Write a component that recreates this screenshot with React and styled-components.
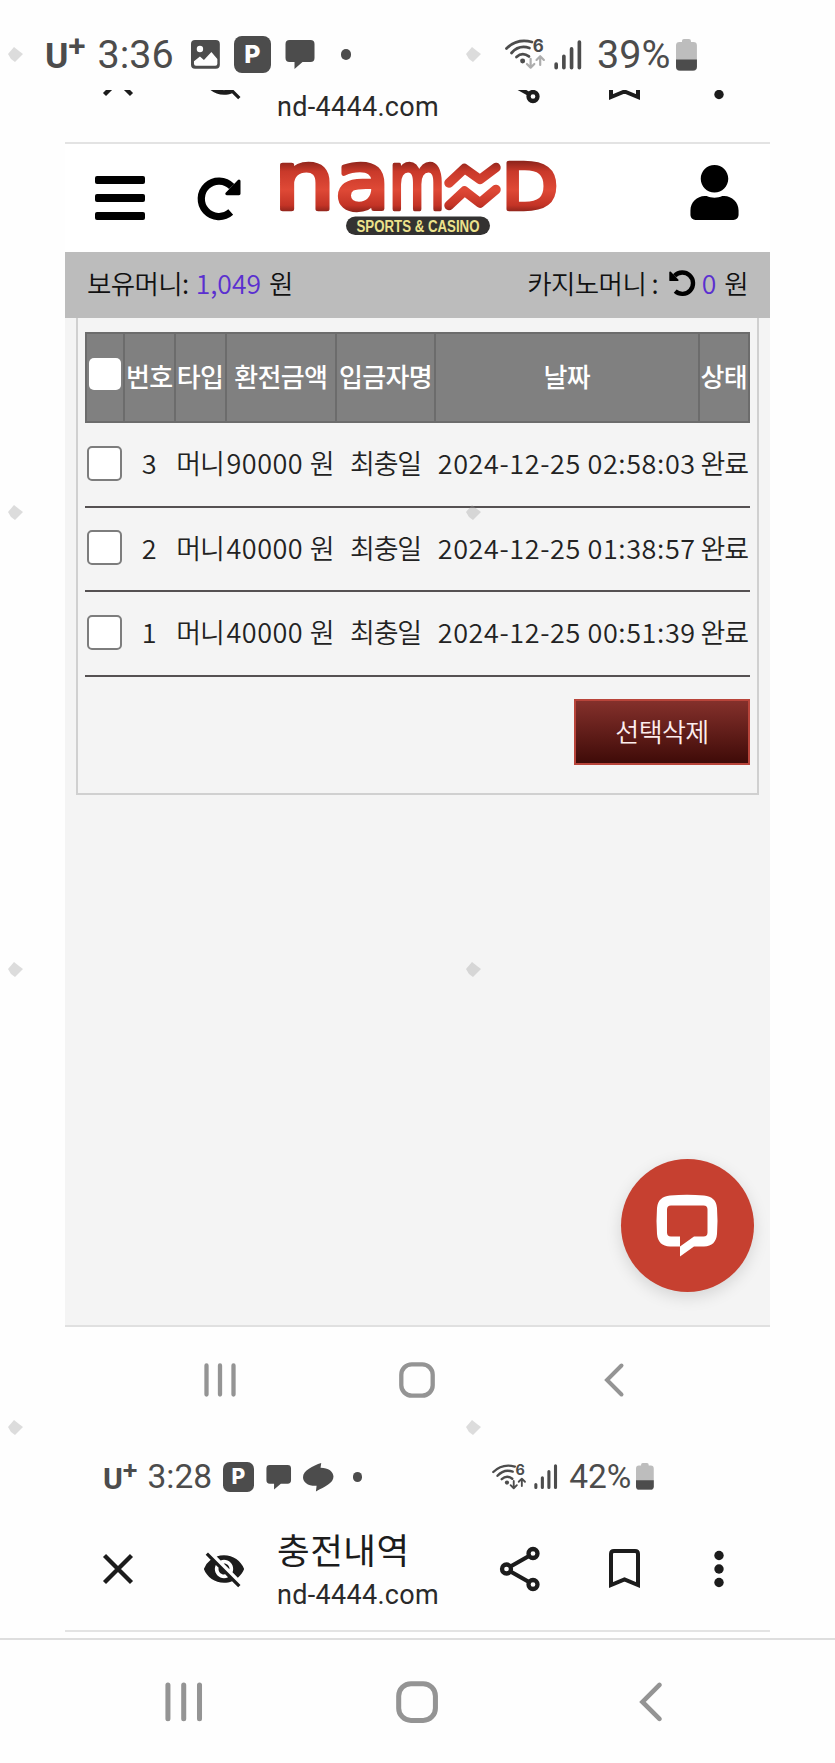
import styled, { createGlobalStyle } from "styled-components";
import { FaUser } from "react-icons/fa";
import { MdVisibilityOff } from "react-icons/md";

const GlobalStyle = createGlobalStyle`
  * {
    box-sizing: border-box;
  }
  body {
    margin: 0;
    background-color: #fefefe;
    overflow: hidden;
  }
  svg {
    display: block;
    flex-shrink: 0;
    overflow: visible;
  }
`;

const Page = styled.div`
  position: relative;
  width: 835px;
  height: 1763px;
  overflow: hidden;
  background-color: #fefefe;
  font-family: "Noto Sans CJK KR", "Noto Sans", sans-serif;
`;

const Screen = styled.div`
  width: 705px;
  margin-left: 65px;
`;

/* status bar: every size is in em, so one font-size scales the whole bar */
const StatusBar = styled.div`
  display: flex;
  align-items: center;
  height: ${(props) => props.$height}px;
  padding: ${(props) => props.$padding};
  font-family: Roboto, sans-serif;
  font-size: ${(props) => props.$size}px;
  line-height: 1;
  color: #4c4c4c;
`;

const StatusItem = styled.div`
  display: flex;
  align-items: center;
  flex-shrink: 0;
  width: ${(props) => props.$w}em;
  margin-left: ${(props) => props.$ml || 0}em;
  white-space: nowrap;
  svg {
    width: 100%;
    height: auto;
  }
`;

const Carrier = styled.span`
  display: flex;
  font-weight: 700;
  font-size: 0.9em;
  line-height: 1;
  padding-top: 0.12em;
`;

const Plus = styled.span`
  font-family: Inter, sans-serif;
  font-size: 0.86em;
  line-height: 1;
  margin: -0.31em 0 0 -0.06em;
`;

const Parking = styled.span`
  display: flex;
  align-items: center;
  justify-content: center;
  width: 0.92em;
  height: 0.92em;
  border-radius: 0.2em;
  background-color: #4c4c4c;
  color: #fefefe;
  b {
    font-family: Inter, sans-serif;
    font-weight: 800;
    font-size: 0.63em;
    line-height: 1;
  }
`;

const Dot = styled.span`
  width: 0.27em;
  height: 0.27em;
  border-radius: 50%;
  background-color: #4c4c4c;
`;

/* in-app browser toolbar */
const ToolbarClip = styled.div`
  display: flex;
  align-items: flex-end;
  height: 54px;
  overflow: hidden;
`;

const ToolbarRow = styled.div`
  display: grid;
  grid-template-columns: 106px 106px 191px 104px 105px 83px;
  align-items: center;
  flex-shrink: 0;
  width: 705px;
  height: 120px;
  padding-bottom: 5px;
  border-bottom: 2px solid #e3e3e3;
  color: #1c1c1c;
  > svg {
    justify-self: center;
  }
`;

const PageTitle = styled.div`
  height: 40px;
  font-size: 35.5px;
  line-height: 32px;
  letter-spacing: 0.5px;
  white-space: nowrap;
`;

const PageUrl = styled.div`
  font-family: Roboto, sans-serif;
  font-size: 27px;
  line-height: 32px;
  letter-spacing: 0.3px;
  margin-top: 6px;
  color: #2a2a2a;
`;

const TitleBlock = styled.div`
  padding-top: 6px;
`;

/* site */
const Header = styled.header`
  display: flex;
  align-items: center;
  height: 108px;
  padding: 0 30px;
  background-color: #fff;
`;

const Burger = styled.div`
  display: flex;
  flex-direction: column;
  gap: 9.5px;
  width: 50px;
  margin-right: 53px;
  span {
    height: 8.5px;
    border-radius: 2px;
    background-color: #000;
  }
`;

const Logo = styled.div`
  display: flex;
  margin: 4px 0 0 38px;
`;

const UserButton = styled.div`
  margin: -11px -2px 0 auto;
`;

const MoneyBar = styled.div`
  display: flex;
  align-items: center;
  justify-content: space-between;
  height: 66px;
  padding: 0 22px 4px;
  background-color: #bcbcbc;
`;

const Money = styled.div`
  display: flex;
  align-items: center;
  font-size: 26.5px;
  font-weight: 350;
  line-height: 40px;
  letter-spacing: -0.6px;
  color: #111;
  white-space: pre;
`;

const Amount = styled.span`
  color: #5a2fd0;
  letter-spacing: 0;
  margin: 0 8px 0 7px;
`;

const Content = styled.main`
  display: flex;
  flex-direction: column;
  justify-content: space-between;
  height: 1009px;
  background-color: #f4f4f4;
  border-bottom: 2px solid #e0e0e0;
`;

const Panel = styled.section`
  width: 683px;
  height: 477px;
  margin-left: 11px;
  padding: 14px 7px 0;
  border: 2px solid #d0d0d0;
  border-top: none;
`;

const Row = styled.div`
  display: grid;
  grid-template-columns: 39px 50.5px 51px 110.5px 99px 263.5px 51.5px;
  height: 84.5px;
  border-bottom: 2px solid #555152;
  font-size: 27px;
  font-weight: 350;
  color: #222;
`;

const HeadRow = styled(Row)`
  height: 91px;
  border: 2px solid #6c6c6c;
  border-right: none;
  grid-template-columns: 38px 50.5px 51px 110.5px 99px 263.5px 50.5px;
  background-color: #808080;
  color: #fff;
  font-size: 26px;
  font-weight: 500;
`;

const Cell = styled.div`
  display: flex;
  align-items: center;
  justify-content: center;
  padding-bottom: 2px;
  line-height: 40px;
  letter-spacing: ${(props) => props.$spacing || 0}px;
  white-space: nowrap;
`;

const HeadCell = styled(Cell)`
  padding-bottom: 3px;
  letter-spacing: -0.7px;
  border-right: 2px solid #6c6c6c;
`;

const Checkbox = styled.span`
  flex-shrink: 0;
  width: ${(props) => (props.$plain ? 32 : 35)}px;
  height: ${(props) => (props.$plain ? 32 : 35)}px;
  border: ${(props) => (props.$plain ? "none" : "2px solid #7d7d7d")};
  border-radius: 5px;
  background-color: #fff;
  margin-top: ${(props) => (props.$plain ? -5 : 0)}px;
`;

const Actions = styled.div`
  display: flex;
  justify-content: flex-end;
  padding-top: 22px;
`;

const DeleteButton = styled.button`
  width: 176px;
  height: 66px;
  padding: 0 0 3px;
  border: 2px solid #b8443a;
  background: linear-gradient(#84302b, #3f0b08);
  color: #fdeeee;
  font-family: inherit;
  font-size: 26px;
  font-weight: 350;
  letter-spacing: -0.6px;
`;

const ChatButton = styled.div`
  display: flex;
  align-items: center;
  justify-content: center;
  align-self: flex-end;
  width: 133px;
  height: 133px;
  margin: 0 16px 33px 0;
  padding-right: 2px;
  border-radius: 50%;
  background-color: #c64030;
  box-shadow: 0 5px 16px rgba(0, 0, 0, 0.13);
`;

/* android navigation keys */
const NavBar = styled.div`
  display: grid;
  grid-template-columns: repeat(3, ${(props) => props.$column}px);
  justify-content: center;
  align-items: center;
  justify-items: center;
  height: ${(props) => props.$height}px;
  padding-right: 1px;
`;

const Divider = styled.div`
  margin-top: 6px;
  height: 2px;
  background-color: #dedede;
`;

const Overlay = styled.svg`
  position: absolute;
  top: 0;
  left: 0;
  pointer-events: none;
`;

const PictureIcon = () => (
  <svg viewBox="0 0 29 29">
    <rect width="29" height="29" rx="4" fill="#4c4c4c" />
    <circle cx="9" cy="9" r="3.2" fill="#fefefe" />
    <path
      d="M3 21.500 9 16.500 13 20 20.500 12 26.500 19V24q0 2-2 2H5q-2 0-2-2Z"
      fill="#fefefe"
    />
  </svg>
);

const BubbleIcon = () => (
  <svg viewBox="0 0 30 29">
    <path
      d="M4.500 0h21q4 0 4 4v14q0 4-4 4H17.500L9.500 29V22h-5q-4 0-4-4V4q0-4 4-4Z"
      fill="#4c4c4c"
    />
  </svg>
);

const SwirlIcon = () => (
  <svg viewBox="908 429 92 86">
    <path
      d="M963 429 961 443C985 443 1000 455 1000 470 1000 490 975 500 947 515L949 498C922 499 908 487 908 472 908 452 938 437 963 429Z"
      fill="#4c4c4c"
    />
  </svg>
);

const WifiIcon = ({ arrows }) => (
  <svg viewBox="0 0 40 31" fill="none" strokeLinecap="round">
    <g stroke="#4c4c4c" strokeWidth="2.800">
      <path d="M1.500 9.500Q12-1 27 3" />
      <path d="M6.500 14Q14 5.500 24.500 9" />
      <path d="M11.500 18Q17.500 12.500 24 17.500" />
    </g>
    <circle cx="17.700" cy="22" r="2.500" fill="#4c4c4c" />
    <g stroke={arrows} strokeWidth="2.200" strokeLinejoin="round">
      <path d="M25.700 20V28.500M22 25 25.700 28.700 29.400 25" />
      <path d="M35.300 26V17.500M31.600 21 35.300 17.300 39 21" />
    </g>
    <text
      x="27.800"
      y="13.300"
      fontFamily="Inter"
      fontWeight="700"
      fontSize="17"
      fill="#4c4c4c"
    >
      6
    </text>
  </svg>
);

const SignalIcon = () => (
  <svg
    viewBox="0 0 28 30"
    stroke="#4c4c4c"
    strokeWidth="3.700"
    strokeLinecap="round"
  >
    <path d="M2.200 24.500V28M10 16.500V28M17.800 9V28M25.700 2V28" />
  </svg>
);

const BatteryIcon = () => (
  <svg viewBox="0 0 21 32">
    <path
      d="M6 3V2q0-2 2-2h5q2 0 2 2v1h2.500Q21 3 21 6.500V28q0 4-4 4H4q-4 0-4-4V6.500Q0 3 3.500 3Z"
      fill="#bdbdbd"
    />
    <path d="M0 20.500H21V27.500q0 4-4 4H4q-4 0-4-4Z" fill="#4c4c4c" />
  </svg>
);

const CloseIcon = () => (
  <svg width="32" height="32" viewBox="0 0 32 32" stroke="#1c1c1c">
    <path d="M2.500 2.500 29.500 29.500M29.500 2.500 2.500 29.500" strokeWidth="4.300" />
  </svg>
);

const ShareIcon = () => (
  <svg
    width="40"
    height="44"
    viewBox="0 0 40 44"
    fill="none"
    stroke="#1c1c1c"
    strokeWidth="4.300"
  >
    <circle cx="33" cy="6.500" r="4.500" />
    <circle cx="6.500" cy="22" r="4.500" />
    <circle cx="33" cy="37.500" r="4.500" />
    <path d="M10.500 19.500 29 9M10.500 24.500 29 35" />
  </svg>
);

const BookmarkIcon = () => (
  <svg
    width="31"
    height="40"
    viewBox="0 0 31 40"
    fill="none"
    stroke="#1c1c1c"
    strokeWidth="4"
  >
    <path d="M2 36V5q0-3 3-3H26q3 0 3 3V36L15.500 30.500Z" />
  </svg>
);

const MoreIcon = () => (
  <svg width="10" height="38" viewBox="0 0 10 38" fill="#1c1c1c">
    <circle cx="5" cy="5.500" r="4.700" />
    <circle cx="5" cy="19" r="4.700" />
    <circle cx="5" cy="32.500" r="4.700" />
  </svg>
);

const ReloadIcon = ({ size, flip }) => (
  <svg
    width={size}
    height={size}
    viewBox="0 0 130 130"
    transform={flip ? "scale(-1 1)" : undefined}
  >
    <path
      d="M102 29A53.500 53.500 0 1 0 99 106"
      fill="none"
      stroke="#000"
      strokeWidth="22"
    />
    <path
      d="M124 12V51H87Z"
      stroke="#000"
      strokeWidth="9"
      strokeLinejoin="round"
    />
  </svg>
);

const LogoMark = () => (
  <svg width="279" height="78" viewBox="0 0 279 78">
    <defs>
      <linearGradient id="red" gradientUnits="userSpaceOnUse" y1="0" y2="52" x2="0">
        <stop offset="0" stopColor="#8c241b" />
        <stop offset="0.200" stopColor="#c9392a" />
        <stop offset="0.550" stopColor="#df4936" />
        <stop offset="0.850" stopColor="#c43426" />
        <stop offset="1" stopColor="#84211a" />
      </linearGradient>
    </defs>
    <g
      fill="url(#red)"
      stroke="url(#red)"
      strokeWidth="4.500"
      strokeLinejoin="round"
      fontFamily="DejaVu Sans"
      fontSize="80"
    >
      <text x="-5" y="47.500" textLength="61" lengthAdjust="spacingAndGlyphs">n</text>
      <text x="56" y="47.500" textLength="55" lengthAdjust="spacingAndGlyphs">a</text>
      <text x="110" y="47.500" textLength="56" lengthAdjust="spacingAndGlyphs">m</text>
      <text x="223" y="47.500" fontSize="62" textLength="56" lengthAdjust="spacingAndGlyphs">D</text>
    </g>
    <g
      fill="none"
      stroke="url(#red)"
      strokeWidth="9.500"
      strokeLinecap="round"
      strokeLinejoin="round"
    >
      <path d="M170 22 185.500 7.500 201 18.500 217 6.500" />
      <path d="M170 44.500 185.500 30 201 42 217 28.500" />
    </g>
    <rect x="67" y="55.500" width="144" height="18.500" rx="9.250" fill="#333231" />
    <text
      x="77.500"
      y="70.500"
      fontFamily="Liberation Sans"
      fontWeight="700"
      fontSize="16"
      fill="#ece28c"
      textLength="123"
      lengthAdjust="spacingAndGlyphs"
    >
      SPORTS &amp; CASINO
    </text>
  </svg>
);

const ChatIcon = () => (
  <svg width="62" height="62" viewBox="0 0 62 62">
    <path
      fillRule="evenodd"
      fill="#fff"
      d="M14 0.500Q31-1 48 0.500 60 1.500 61 13 62 26 61 39 60 51 48 51.500H38L24 61.500V51.500H14Q2 51 1 39 0 26 1 13 2 1.500 14 0.500ZM15 10.500Q11 10.500 11 14.500V37.500Q11 41.500 15 41.500H24V51.500L38 41.500H47.500Q51.500 41.500 51.500 37.500V14.500Q51.500 10.500 47.500 10.500Z"
    />
  </svg>
);

const NavKeys = ({ height, column, scale }) => (
  <NavBar $height={height} $column={column}>
    <svg
      width={32 * scale}
      height={34 * scale}
      viewBox="0 0 32 34"
      stroke="#949494"
      strokeWidth="4.300"
      strokeLinecap="round"
    >
      <path d="M2.500 2.500V31.500M16 2.500V31.500M29.500 2.500V31.500" />
    </svg>
    <svg width={36 * scale} height={36 * scale} viewBox="0 0 36 36">
      <rect
        x="2.300"
        y="2.300"
        width="31.400"
        height="31.400"
        rx="10.500"
        fill="none"
        stroke="#949494"
        strokeWidth="4.300"
      />
    </svg>
    <svg
      width={20 * scale}
      height={34 * scale}
      viewBox="0 0 20 34"
      fill="none"
      stroke="#949494"
      strokeWidth="4"
      strokeLinecap="round"
    >
      <path d="M17.500 2.500 3 17 17.500 31.500" />
    </svg>
  </NavBar>
);

const Toolbar = ({ title }) => (
  <ToolbarRow>
    <CloseIcon />
    <MdVisibilityOff size={44} />
    <TitleBlock>
      <PageTitle>{title}</PageTitle>
      <PageUrl>nd-4444.com</PageUrl>
    </TitleBlock>
    <ShareIcon />
    <BookmarkIcon />
    <MoreIcon />
  </ToolbarRow>
);

const CarrierName = () => (
  <Carrier>
    U<Plus>+</Plus>
  </Carrier>
);

const headers = ["번호", "타입", "환전금액", "입금자명", "날짜", "상태"];

const rows = [
  { no: 3, money: "90000 원", date: "2024-12-25 02:58:03" },
  { no: 2, money: "40000 원", date: "2024-12-25 01:38:57" },
  { no: 1, money: "40000 원", date: "2024-12-25 00:51:39" },
];

// faint marks repeated over the whole page
const marks = [54, 512, 969, 1427].flatMap((y) => [
  [15, y],
  [473, y],
]);

const App = () => {
  return (
    <Page>
      <GlobalStyle />
      <StatusBar $height={90} $size={39.5} $padding="19px 0 0 45px">
        <StatusItem $w={1.33}>
          <CarrierName />
        </StatusItem>
        <StatusItem $w={1.93}>3:36</StatusItem>
        <StatusItem $w={0.73} $ml={0.44}>
          <PictureIcon />
        </StatusItem>
        <StatusItem $w={0.92} $ml={0.36}>
          <Parking>
            <b>P</b>
          </Parking>
        </StatusItem>
        <StatusItem $w={0.76} $ml={0.36}>
          <BubbleIcon />
        </StatusItem>
        <StatusItem $w={0.27} $ml={0.66}>
          <Dot />
        </StatusItem>
        <StatusItem $w={1.01} $ml={3.88}>
          <WifiIcon arrows="#adadad" />
        </StatusItem>
        <StatusItem $w={0.7} $ml={0.24}>
          <SignalIcon />
        </StatusItem>
        <StatusItem $w={1.86} $ml={0.39}>
          39%
        </StatusItem>
        <StatusItem $w={0.53} $ml={0.14}>
          <BatteryIcon />
        </StatusItem>
      </StatusBar>

      <Screen>
        <ToolbarClip>
          <Toolbar />
        </ToolbarClip>

        <Header>
          <Burger>
            <span />
            <span />
            <span />
          </Burger>
          <ReloadIcon size={43} />
          <Logo>
            <LogoMark />
          </Logo>
          <UserButton>
            <FaUser size={55} />
          </UserButton>
        </Header>

        <MoneyBar>
          <Money>
            보유머니:<Amount>1,049</Amount>원
          </Money>
          <Money>
            카지노머니 :{"  "}
            <ReloadIcon size={26} flip />
            <Amount>0</Amount>원
          </Money>
        </MoneyBar>

        <Content>
          <Panel>
            <HeadRow>
              <HeadCell>
                <Checkbox $plain />
              </HeadCell>
              {headers.map((item) => (
                <HeadCell key={item}>{item}</HeadCell>
              ))}
            </HeadRow>
            {rows.map((row) => (
              <Row key={row.no}>
                <Cell>
                  <Checkbox />
                </Cell>
                <Cell>{row.no}</Cell>
                <Cell $spacing={-1.2}>머니</Cell>
                <Cell $spacing={0.5}>{row.money}</Cell>
                <Cell $spacing={-1.2}>최충일</Cell>
                <Cell $spacing={0.6}>{row.date}</Cell>
                <Cell $spacing={-1.2}>완료</Cell>
              </Row>
            ))}
            <Actions>
              <DeleteButton>선택삭제</DeleteButton>
            </Actions>
          </Panel>
          <ChatButton>
            <ChatIcon />
          </ChatButton>
        </Content>

        <NavKeys height={106} column={197} scale={1} />

        <StatusBar $height={79} $size={33.5} $padding="9px 0 0 38px">
          <StatusItem $w={1.33}>
            <CarrierName />
          </StatusItem>
          <StatusItem $w={1.93}>3:28</StatusItem>
          <StatusItem $w={0.92} $ml={0.32}>
            <Parking>
              <b>P</b>
            </Parking>
          </StatusItem>
          <StatusItem $w={0.76} $ml={0.36}>
            <BubbleIcon />
          </StatusItem>
          <StatusItem $w={0.91} $ml={0.34}>
            <SwirlIcon />
          </StatusItem>
          <StatusItem $w={0.27} $ml={0.58}>
            <Dot />
          </StatusItem>
          <StatusItem $w={1.01} $ml={3.89}>
            <WifiIcon arrows="#4c4c4c" />
          </StatusItem>
          <StatusItem $w={0.7} $ml={0.24}>
            <SignalIcon />
          </StatusItem>
          <StatusItem $w={1.86} $ml={0.36}>
            42%
          </StatusItem>
          <StatusItem $w={0.53} $ml={0.12}>
            <BatteryIcon />
          </StatusItem>
        </StatusBar>

        <Toolbar title="충전내역" />
      </Screen>

      <Divider />
      <NavKeys height={124} column={233.5} scale={1.17} />

      <Overlay width="835" height="1763">
        {marks.map(([x, y]) => (
          <path
            key={`${x}-${y}`}
            d={`M${x - 1} ${y - 7} ${x + 4} ${y - 3} ${x + 8} ${y} ${x + 4} ${y + 4} ${x} ${y + 8} ${x - 4} ${y + 5} ${x - 7} ${y}Z`}
            fill="#9a9a9a"
            fillOpacity="0.34"
          />
        ))}
      </Overlay>
    </Page>
  );
};

export default App;
